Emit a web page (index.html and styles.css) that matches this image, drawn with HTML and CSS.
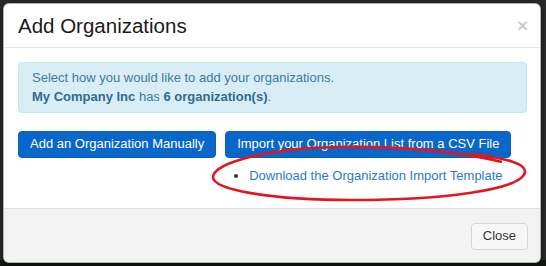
FILE: index.html
```html
<!DOCTYPE html>
<html lang="en">
<head>
  <meta charset="UTF-8">
  <title>Add Organizations</title>
  <link rel="stylesheet" href="styles.css">
</head>
<body>
  <div class="modal">
    <div class="modal-header">
      <h4 class="modal-title">Add Organizations</h4>
      <button class="close" type="button">&times;</button>
    </div>

    <div class="modal-body">
      <div class="alert">
        Select how you would like to add your organizations.<br>
        <strong>My Company Inc</strong> has <strong>6 organization(s)</strong>.
      </div>

      <div class="actions">
        <button class="btn btn-primary">Add an Organization Manually</button>
        <div class="import">
          <button class="btn btn-primary">Import your Organization List from a CSV File</button>
          <ul class="template-list">
            <li><a href="#">Download the Organization Import Template</a></li>
          </ul>
        </div>
      </div>

      <!-- red marker drawn over the screenshot -->
      <svg class="annotation" width="320" height="60" viewBox="0 0 320 60">
        <path d="M258 4 C 295 8, 314 14, 313 22 C 310 40, 230 50, 140 50 C 60 50, 1 40, 1 27 C 2 12, 60 -2, 125 -3 C 190 -4, 250 2, 290 12"
              fill="none" stroke="#e3161e" stroke-width="2.6"/>
      </svg>
    </div>

    <div class="modal-footer">
      <button class="btn btn-default">Close</button>
    </div>
  </div>
</body>
</html>
```

FILE: styles.css
```css
:root {
  --backdrop: #2b2b2b;
  --primary: #0867c8;
  --link: #2a7bc4;
  --info-bg: #d9edf7;
  --info-border: #bce8f1;
  --info-text: #3a7ca3;
  --footer-bg: #f3f3f3;
}

body {
  font-family: "Liberation Sans", Arial, sans-serif;
  font-size: 13px;
  line-height: 18.5px;
  color: #333;
  margin: 0;
  padding: 3px 5px 0 3px;
  height: 263px;
  overflow: hidden;
  background: linear-gradient(var(--backdrop) 0 260px, #111811 260px);
}

.modal {
  position: relative;
  background: #fff;
  border: 1px solid rgba(0, 0, 0, 0.3);
  border-radius: 6px;
  box-shadow: 0 3px 9px rgba(0, 0, 0, 0.5);
  overflow: hidden;
}

.modal-header {
  display: flex;
  justify-content: space-between;
  align-items: center;
  padding: 10px 14px 10px 14px;
  border-bottom: 1px solid #e5e5e5;
}

.modal-title {
  margin: 0;
  font-size: 20.5px;
  font-weight: normal;
  line-height: 23px;
  color: #1a1a1a;
}

.close {
  background: none;
  border: 0;
  padding: 0;
  font-family: "Liberation Sans", Arial, sans-serif;
  font-size: 19px;
  font-weight: bold;
  line-height: 1;
  color: #000;
  opacity: 0.2;
  margin-right: -2px;
}

.modal-body {
  position: relative;
  padding: 14px 13px 23px 14px;
}

.alert {
  background: var(--info-bg);
  border: 1px solid var(--info-border);
  border-radius: 4px;
  color: var(--info-text);
  padding: 6px 13px;
}

.alert strong {
  color: #2f6b8f;
}

.actions {
  display: flex;
  align-items: flex-start;
  gap: 9px;
  margin-top: 18px;
}

.btn {
  font-family: "Liberation Sans", Arial, sans-serif;
  font-size: 13px;
  line-height: 18.5px;
  padding: 3px 11px;
  border: 1px solid transparent;
  border-radius: 4px;
  cursor: pointer;
}

.btn-primary {
  background: var(--primary);
  border-color: #0860bb;
  color: #fff;
}

.btn-default {
  background: #f7f7f7;
  border-color: #d6d6d6;
  color: #333;
}

.template-list {
  margin: 9px 0 0;
  padding-left: 24px;
}

.template-list a {
  color: var(--link);
  text-decoration: none;
}

.annotation {
  position: absolute;
  left: 208px;
  top: 102px;
  overflow: visible;
}

.modal-footer {
  display: flex;
  justify-content: flex-end;
  padding: 14px 12px 12px;
  background: var(--footer-bg);
  border-top: 1px solid #e0e0e0;
}
```
